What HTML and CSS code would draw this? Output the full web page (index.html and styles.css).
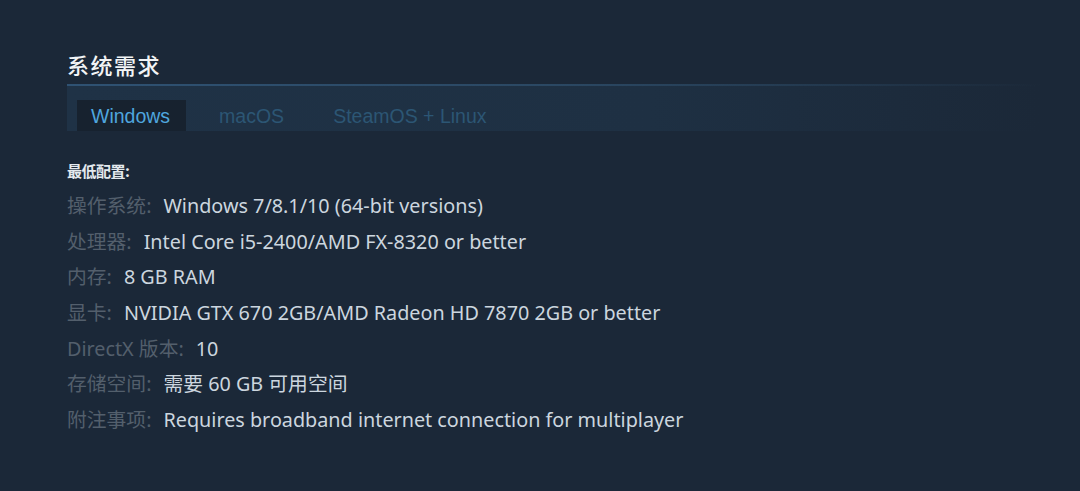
FILE: index.html
```html
<!DOCTYPE html>
<html lang="zh-CN">
<head>
<meta charset="utf-8">
<link rel="stylesheet" href="styles.css">
</head>
<body>
<section class="sysreq">
  <h2 class="title">系统需求</h2>
  <div class="tabs">
    <div class="tab active">Windows</div>
    <div class="tab">macOS</div>
    <div class="tab">SteamOS + Linux</div>
  </div>
  <div class="reqs">
    <div class="min">最低配置:</div>
    <ul class="list">
      <li><span class="lbl">操作系统:</span><span class="val">Windows 7/8.1/10 (64-bit versions)</span></li>
      <li><span class="lbl">处理器:</span><span class="val">Intel Core i5-2400/AMD FX-8320 or better</span></li>
      <li><span class="lbl">内存:</span><span class="val">8 GB RAM</span></li>
      <li><span class="lbl">显卡:</span><span class="val">NVIDIA GTX 670 2GB/AMD Radeon HD 7870 2GB or better</span></li>
      <li><span class="lbl">DirectX 版本:</span><span class="val">10</span></li>
      <li><span class="lbl">存储空间:</span><span class="val">需要 60 GB 可用空间</span></li>
      <li><span class="lbl">附注事项:</span><span class="val">Requires broadband internet connection for multiplayer</span></li>
    </ul>
  </div>
</section>
</body>
</html>
```
FILE: styles.css
```css
html, body {
  margin: 0;
  padding: 0;
  background: #1b2838;
  height: 100%;
}
body {
  font-family: "Noto Sans", "Noto Sans CJK SC", sans-serif;
}
.sysreq {
  padding: 49px 40px 0 67px;
}
.title {
  margin: 0;
  font-family: "Noto Sans CJK SC", sans-serif;
  font-size: 22px;
  font-weight: 500;
  line-height: 30px;
  color: #f2f4f6;
  letter-spacing: 1.5px;
}
.tabs {
  margin-top: 5px;
  height: 45px;
  border-top: 2px solid transparent;
  border-image: linear-gradient(to right, #2f5273 0%, #2b4863 50%, rgba(27,40,56,0) 100%) 1;
  background: linear-gradient(to right, #1f3246 0%, #1e3043 60%, #1b2838 100%);
  display: flex;
  align-items: flex-end;
  gap: 19px;
  padding-left: 10px;
}
.tab {
  height: 31px;
  line-height: 33px;
  padding: 0 16px 0 14px;
  font-family: "Liberation Sans", Arial, sans-serif;
  font-size: 19.5px;
  color: #2c5674;
}
.tab.active {
  background: #17222f;
  color: #4fa6de;
}
.reqs {
  padding-top: 29px;
}
.min {
  font-family: "Noto Sans CJK SC", sans-serif;
  font-size: 15px;
  font-weight: 700;
  color: #e4e9ee;
  line-height: 22px;
  letter-spacing: -0.5px;
}
.list {
  list-style: none;
  margin: 6px 0 0;
  padding: 0;
}
.list li {
  height: 35.7px;
  line-height: 35.7px;
  font-size: 19.8px;
  white-space: nowrap;
}
.lbl {
  color: #535f6c;
  margin-right: 12px;
}
.val {
  color: #ccd6df;
}
```
